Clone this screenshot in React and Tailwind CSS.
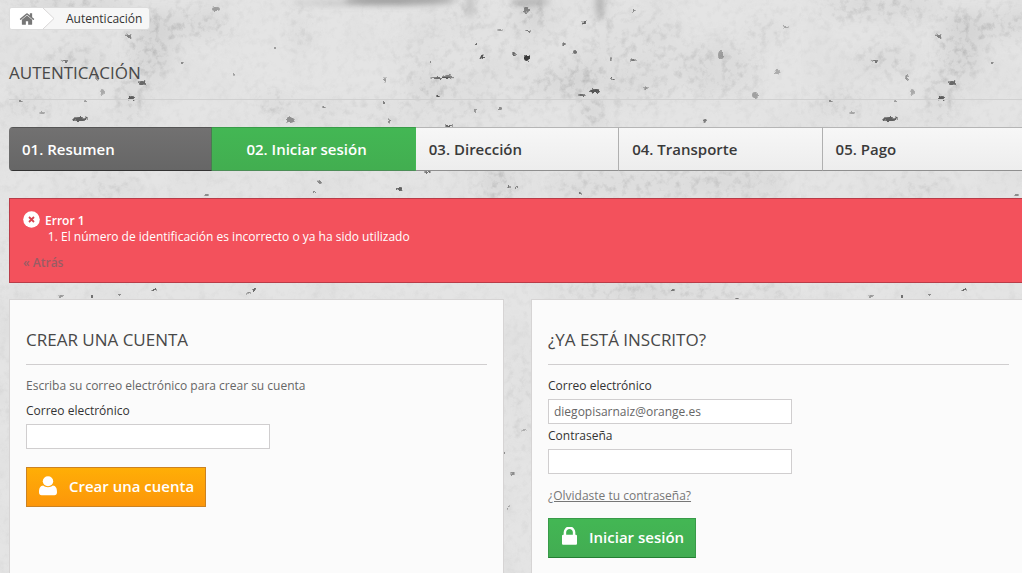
import { useState } from 'react';

const steps = [
  { label: '01. Resumen', state: 'done' },
  { label: '02. Iniciar sesión', state: 'current' },
  { label: '03. Dirección', state: 'todo' },
  { label: '04. Transporte', state: 'todo' },
  { label: '05. Pago', state: 'todo' },
];

const stepStyles = {
  done: 'border-t-[#555] border-b-[#333] border-r-[#4b7a52] bg-linear-to-b from-[#727171] to-[#666] pl-[13px] text-white',
  current: 'border-t-[#399b49] border-b-[#4c8d57] border-r-[#43b754] bg-linear-to-b from-[#43b754] to-[#42ae50] pl-[34px] text-white',
  todo: 'border-t-[#b5b5b5] border-b-[#8f8f8f] border-r-[#b0b0b0] bg-linear-to-b from-[#f7f7f7] to-[#ededed] pl-[13px] text-[#3a3a3a]',
};

// soft stains of the wall: cx, cy, rx, ry, opacity
const stains = [
  [150, 45, 22, 34, 0.35], [185, 25, 45, 14, 0.3], [75, 60, 30, 14, 0.25], [130, 95, 14, 25, 0.3],
  [300, 30, 12, 22, 0.15], [470, 6, 5, 14, 0.5], [530, 10, 14, 18, 0.4],
  [600, 4, 7, 18, 0.5], [430, 85, 22, 10, 0.35], [578, 80, 14, 14, 0.5], [592, 112, 10, 14, 0.5],
  [550, 84, 16, 12, 0.3], [640, 60, 50, 50, 0.15], [720, 70, 40, 26, 0.2], [765, 32, 24, 14, 0.15],
  [275, 105, 16, 9, 0.35], [30, 105, 26, 8, 0.3], [497, 184, 18, 14, 0.4], [640, 184, 90, 12, 0.25],
  [740, 184, 50, 12, 0.2], [110, 186, 30, 8, 0.2], [70, 7, 60, 12, 0.3], [610, 291, 50, 8, 0.25],
  [680, 292, 70, 9, 0.3], [775, 292, 25, 8, 0.2], [3, 400, 6, 12, 0.2], [520, 400, 8, 50, 0.15],
  [500, 60, 110, 50, 0.08], [410, 110, 120, 16, 0.08],
];

// shadows along the upper edge
const shadows = [
  [400, 0, 56, 5, 0.6], [470, 6, 3, 12, 0.35], [530, 2, 20, 4, 0.4], [600, 4, 4, 16, 0.4], [350, 3, 60, 3, 0.25],
];

// pits of the wall: cx, cy, rx, ry, opacity
const pits = [
  [80, 119, 8, 2, 0.7], [142, 83, 4, 2, 0.65], [132, 98, 3, 2, 0.7], [129, 36, 3, 2, 0.5],
  [65, 61, 3, 1, 0.6], [97, 78, 2, 3, 0.4], [216, 9, 4, 2, 0.35], [182, 63, 2, 1, 0.5],
  [234, 74, 1, 2, 0.4], [290, 120, 4, 3, 0.45], [275, 48, 1, 1, 0.5], [324, 107, 2, 1, 0.5],
  [102, 92, 2, 3, 0.3], [20, 101, 2, 1, 0.5], [86, 101, 2, 1, 0.4], [42, 113, 3, 1, 0.35],
  [476, 44, 1, 1, 0.8], [482, 57, 2, 2, 0.8], [527, 58, 3, 3, 0.9], [514, 54, 2, 1, 0.7],
  [440, 78, 10, 1, 0.6], [448, 77, 5, 2, 0.5], [438, 96, 2, 1, 0.8], [595, 91, 5, 2, 0.75],
  [582, 95, 4, 1, 0.6], [575, 52, 2, 2, 0.6], [564, 44, 2, 1, 0.6], [613, 79, 2, 1, 0.7],
  [633, 60, 3, 1, 0.6], [584, 23, 2, 2, 0.7], [528, 31, 3, 1, 0.6], [526, 10, 3, 3, 0.5],
  [500, 30, 3, 1, 0.4], [431, 62, 1, 1, 0.6], [385, 80, 1, 3, 0.4], [389, 121, 1, 3, 0.5],
  [384, 103, 1, 1, 0.7], [449, 126, 4, 1, 0.7], [500, 109, 2, 1, 0.5], [475, 111, 1, 1, 0.5],
  [721, 55, 3, 4, 0.35], [705, 121, 2, 2, 0.55], [777, 72, 3, 2, 0.3], [755, 95, 3, 3, 0.35],
  [786, 27, 3, 1, 0.35], [634, 11, 2, 1, 0.5], [611, 59, 1, 2, 0.5], [646, 88, 2, 1, 0.4],
  [320, 182, 2, 2, 0.5], [400, 189, 3, 2, 0.7], [314, 192, 1, 1, 0.6], [207, 195, 2, 1, 0.5],
  [509, 187, 2, 1, 0.6], [517, 187, 1, 1, 0.6], [580, 193, 2, 1, 0.6], [428, 172, 4, 1, 0.6],
  [154, 290, 3, 1, 0.7], [254, 290, 2, 1, 0.7], [249, 293, 2, 1, 0.5], [92, 297, 1, 1, 0.8],
  [119, 295, 1, 1, 0.6], [61, 296, 3, 1, 0.4], [672, 307, 2, 2, 0.6], [673, 290, 2, 1, 0.6],
  [737, 299, 2, 1, 0.6], [790, 308, 1, 1, 0.6], [513, 474, 3, 1, 0.5], [508, 508, 1, 2, 0.4],
  [504, 453, 1, 1, 0.6], [524, 430, 3, 1, 0.3],
];

function Blots({ items, strength = 1 }) {
  return items.map(([cx, cy, rx, ry, o]) => (
    <ellipse key={`${cx}-${cy}`} cx={cx + 9} cy={cy} rx={rx} ry={ry} opacity={o * strength} />
  ));
}

function ConcreteWall() {
  return (
    <svg className="absolute inset-0 -z-10 h-full w-full" aria-hidden="true">
      <defs>
        <filter id="soft" x="0" y="0" width="810" height="800" filterUnits="userSpaceOnUse">
          <feGaussianBlur stdDeviation="9" />
        </filter>
        <filter id="shade" x="0" y="0" width="810" height="800" filterUnits="userSpaceOnUse">
          <feGaussianBlur stdDeviation="3" />
        </filter>
        <filter id="chip" x="0" y="0" width="810" height="800" filterUnits="userSpaceOnUse">
          <feTurbulence type="fractalNoise" baseFrequency="0.35" numOctaves="2" seed="4" result="n" />
          <feDisplacementMap in="SourceGraphic" in2="n" scale="4" xChannelSelector="R" yChannelSelector="G" />
          <feGaussianBlur stdDeviation="0.6" />
        </filter>
        <filter id="grain" x="0" y="0" width="100%" height="100%">
          <feTurbulence type="fractalNoise" baseFrequency="0.13" numOctaves="5" seed="9" />
          <feColorMatrix values="0 0 0 0 0.4  0 0 0 0 0.4  0 0 0 0 0.4  2.4 0 0 0 -1.15" />
        </filter>
        <filter id="clouds" x="0" y="0" width="100%" height="100%">
          <feTurbulence type="fractalNoise" baseFrequency="0.02" numOctaves="5" seed="3" />
          <feColorMatrix values="0 0 0 0 0.5  0 0 0 0 0.5  0 0 0 0 0.5  1 0 0 0 -0.42" />
        </filter>
        <mask id="stained" maskUnits="userSpaceOnUse" x="0" y="0" width="810" height="800">
          <rect width="810" height="800" fill="#222" />
          <g filter="url(#soft)" fill="#fff">
            <Blots items={stains} strength={2} />
          </g>
        </mask>
        <pattern id="wall" patternUnits="userSpaceOnUse" x="-9" y="0" width="810" height="800">
          <rect width="810" height="800" fill="#e4e4e4" />
          <rect width="810" height="800" filter="url(#clouds)" opacity="0.25" />
          <g filter="url(#soft)" fill="#aaa">
            <Blots items={stains} strength={0.5} />
          </g>
          <g filter="url(#shade)" fill="#777">
            <Blots items={shadows} />
          </g>
          <g mask="url(#stained)">
            <rect width="810" height="800" filter="url(#grain)" />
          </g>
          <g filter="url(#chip)" fill="#2a2a2a">
            <Blots items={pits} />
          </g>
        </pattern>
      </defs>
      <rect width="100%" height="100%" fill="url(#wall)" />
    </svg>
  );
}

function HomeIcon() {
  return (
    <svg viewBox="0 0 1792 1792" className="size-4" fill="currentColor" aria-hidden="true">
      <path d="M1472 992v480q0 26-19 45t-45 19h-384v-384h-256v384h-384q-26 0-45-19t-19-45v-480q0-1 .5-3t.5-3l575-474 575 474q1 2 1 6zm223-69l-62 74q-8 9-21 11h-3q-13 0-21-7l-692-577-692 577q-12 8-24 7-13-2-21-11l-62-74q-8-10-7-23.5t11-21.5l719-599q32-26 76-26t76 26l244 204v-195q0-14 9-23t23-9h192q14 0 23 9t9 23v408l219 182q10 8 11 21.5t-7 23.5z" />
    </svg>
  );
}

function UserIcon() {
  return (
    <svg viewBox="0 0 18 20" className="h-5 w-[18px]" fill="currentColor" aria-hidden="true">
      <ellipse cx="9" cy="5.2" rx="5.2" ry="5" />
      <path d="M4.2 9.6C6.6 11.9 11.4 11.9 13.8 9.6C16.8 9.9 18 12.2 18 16.2C18 18.2 17 19.2 15.4 19.2H2.6C1 19.2 0 18.2 0 16.2C0 12.2 1.2 9.9 4.2 9.6Z" />
    </svg>
  );
}

function LockIcon() {
  return (
    <svg viewBox="320 192 1152 1344" className="mb-0.5 h-[18px] w-[15px]" fill="currentColor" aria-hidden="true">
      <path d="M640 768h512v-192q0-106-75-181t-181-75-181 75-75 181v192zm832 96v576q0 40-28 68t-68 28h-960q-40 0-68-28t-28-68v-576q0-40 28-68t68-28h32v-192q0-184 132-316t316-132 316 132 132 316v192h32q40 0 68 28t28 68z" />
    </svg>
  );
}

function Breadcrumb() {
  return (
    <nav className="flex h-[23px] w-fit overflow-hidden rounded-[3px] border border-[#dcdcdc] bg-[#f6f6f6] text-xs font-medium text-[#333]">
      <a href="#inicio" aria-label="Inicio" className="flex items-center bg-white pl-[9px] pr-2 text-[#777]">
        <HomeIcon />
      </a>
      <svg viewBox="0 0 12 24" className="h-full w-3" preserveAspectRatio="none" aria-hidden="true">
        <path d="M0 0L11 12L0 24Z" fill="#fff" />
        <path d="M0 0L11 12L0 24" fill="none" stroke="#d6d4d4" />
      </svg>
      <span className="flex items-center pl-[11px] pr-[7px]">Autenticación</span>
    </nav>
  );
}

function Steps() {
  return (
    <ul className="mt-[27px] grid h-11 grid-cols-5 overflow-hidden rounded-l-[4px]">
      {steps.map((step) => (
        <li
          key={step.label}
          className={`flex items-center border-y border-r text-[15px] font-semibold ${stepStyles[step.state]}`}
        >
          {step.label}
        </li>
      ))}
    </ul>
  );
}

function ErrorAlert() {
  return (
    <div role="alert" className="mt-[27px] border border-[#b93c48] bg-[#f3515c] pb-[11px] pl-[13px] pt-3 text-xs leading-4 text-white">
      <div className="flex items-start gap-[5px]">
        <svg viewBox="0 0 17 17" className="size-[17px]" aria-hidden="true">
          <circle cx="8.5" cy="8.5" r="8.3" fill="#fff" />
          <path d="M6 6L11 11M11 6L6 11" stroke="#d8434f" strokeWidth="1.8" />
        </svg>
        <p className="pt-0.5 font-semibold">Error 1</p>
      </div>
      <ol className="list-decimal pl-[38px]">
        <li>El número de identificación es incorrecto o ya ha sido utilizado</li>
      </ol>
      <a href="#atras" className="mt-[10px] block w-fit font-semibold text-[#9a5c64]">« Atrás</a>
    </div>
  );
}

function Field({ id, label, type, value, onChange }) {
  return (
    <div>
      <label htmlFor={id} className="block text-xs font-medium leading-4 text-[#333]">{label}</label>
      <input
        id={id}
        type={type}
        value={value}
        onChange={(e) => onChange(e.target.value)}
        className="mt-[5px] block h-[25px] w-[244px] border border-[#d0cecf] bg-white px-[5px] text-xs text-[#666] outline-none"
      />
    </div>
  );
}

function Card({ title, children }) {
  return (
    <form
      onSubmit={(e) => e.preventDefault()}
      className="border border-[#d6d4d4] bg-[#fbfbfb] px-4 pb-5 pt-[29px]"
    >
      <h3 className="mb-[13px] border-b border-[#d0cecf] pb-[13px] text-[17px] font-medium uppercase leading-[22px] text-[#484848]">
        {title}
      </h3>
      {children}
    </form>
  );
}

export default function App() {
  const [newEmail, setNewEmail] = useState('');
  const [email, setEmail] = useState('diegopisarnaiz@orange.es');
  const [password, setPassword] = useState('');

  return (
    <div className="relative isolate min-h-screen overflow-hidden bg-[#e3e3e3] pl-[9px] pt-[7px] font-['Open_Sans',sans-serif]">
      <ConcreteWall />
      <main className="-mr-1">
        <Breadcrumb />
        <h1 className="mt-8 border-b border-[#d0d0d0] pb-[15px] text-[17px] font-medium uppercase leading-[22px] text-[#484848]">
          Autenticación
        </h1>
        <Steps />
        <ErrorAlert />

        <div className="mt-4 grid grid-cols-2 gap-[27px]">
          <Card title="Crear una cuenta">
            <p className="mb-[9px] text-xs leading-4 text-[#666]">Escriba su correo electrónico para crear su cuenta</p>
            <Field id="new-email" label="Correo electrónico" type="email" value={newEmail} onChange={setNewEmail} />
            <button
              type="submit"
              className="mt-[18px] flex h-10 items-center gap-3 border border-[#cb8222] bg-linear-to-b from-[#ffae06] to-[#fc960a] pb-0.5 pl-3 pr-[11px] text-[15px] font-semibold text-white"
            >
              <UserIcon />
              Crear una cuenta
            </button>
          </Card>

          <Card title="¿Ya está inscrito?">
            <div className="flex flex-col gap-1">
              <Field id="email" label="Correo electrónico" type="email" value={email} onChange={setEmail} />
              <Field id="password" label="Contraseña" type="password" value={password} onChange={setPassword} />
            </div>
            <a href="#recuperar" className="mt-[14px] block w-fit text-xs leading-4 text-[#777] underline">
              ¿Olvidaste tu contraseña?
            </a>
            <button
              type="submit"
              className="mt-[14px] flex h-10 items-center gap-3 border border-[#399a49] border-b-[#247f32] bg-linear-to-b from-[#43b754] to-[#42ac52] pb-0.5 pl-[13px] pr-[11px] text-[15px] font-semibold text-white"
            >
              <LockIcon />
              Iniciar sesión
            </button>
          </Card>
        </div>
      </main>
    </div>
  );
}
